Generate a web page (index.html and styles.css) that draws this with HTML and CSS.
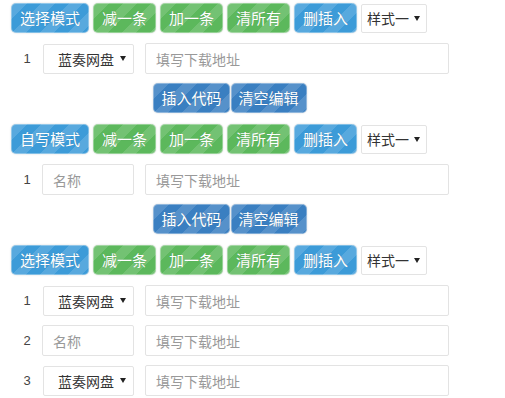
FILE: index.html
```html
<!DOCTYPE html>
<html lang="zh-CN">
<head>
<meta charset="utf-8">
<title>下载地址编辑</title>
<link rel="stylesheet" href="styles.css">
</head>
<body>
<div class="page">
  <section class="block">
    <div class="toolbar">
      <button class="btn btn-info">选择模式</button>
      <button class="btn btn-success">减一条</button>
      <button class="btn btn-success">加一条</button>
      <button class="btn btn-success">清所有</button>
      <button class="btn btn-info">删插入</button>
      <div class="sel sel-style"><span>样式一</span><i class="caret"></i></div>
    </div>
    <div class="rows">
      <div class="row">
        <span class="num">1</span>
        <div class="sel sel-disk"><span>蓝奏网盘</span><i class="caret"></i></div>
        <input class="field url" placeholder="填写下载地址">
      </div>
    </div>
    <div class="actions">
      <button class="btn btn-primary">插入代码</button>
      <button class="btn btn-primary">清空编辑</button>
    </div>
  </section>

  <section class="block">
    <div class="toolbar">
      <button class="btn btn-info">自写模式</button>
      <button class="btn btn-success">减一条</button>
      <button class="btn btn-success">加一条</button>
      <button class="btn btn-success">清所有</button>
      <button class="btn btn-info">删插入</button>
      <div class="sel sel-style"><span>样式一</span><i class="caret"></i></div>
    </div>
    <div class="rows">
      <div class="row">
        <span class="num">1</span>
        <input class="field name" placeholder="名称">
        <input class="field url" placeholder="填写下载地址">
      </div>
    </div>
    <div class="actions">
      <button class="btn btn-primary">插入代码</button>
      <button class="btn btn-primary">清空编辑</button>
    </div>
  </section>

  <section class="block">
    <div class="toolbar">
      <button class="btn btn-info">选择模式</button>
      <button class="btn btn-success">减一条</button>
      <button class="btn btn-success">加一条</button>
      <button class="btn btn-success">清所有</button>
      <button class="btn btn-info">删插入</button>
      <div class="sel sel-style"><span>样式一</span><i class="caret"></i></div>
    </div>
    <div class="rows">
      <div class="row">
        <span class="num">1</span>
        <div class="sel sel-disk"><span>蓝奏网盘</span><i class="caret"></i></div>
        <input class="field url" placeholder="填写下载地址">
      </div>
      <div class="row">
        <span class="num">2</span>
        <input class="field name" placeholder="名称">
        <input class="field url" placeholder="填写下载地址">
      </div>
      <div class="row">
        <span class="num">3</span>
        <div class="sel sel-disk"><span>蓝奏网盘</span><i class="caret"></i></div>
        <input class="field url" placeholder="填写下载地址">
      </div>
    </div>
  </section>
</div>
</body>
</html>
```

FILE: styles.css
```css
* { box-sizing: border-box; }

html, body {
  margin: 0;
  padding: 0;
  background: #fff;
}

body {
  font-family: "Noto Sans CJK SC", "Liberation Sans", sans-serif;
  font-size: 14px;
  color: #333;
}

.page {
  padding: 3px 0 0 11px;
  width: 449px;
}

.block {
  display: flex;
  flex-direction: column;
  margin-bottom: 11px;
}

.toolbar {
  display: flex;
  align-items: center;
  gap: 4px;
  height: 30px;
  margin-bottom: 10px;
}

.btn {
  height: 30px;
  padding: 0 8px;
  border: 1px solid rgba(255, 255, 255, 0.35);
  border-radius: 5px;
  color: #fff;
  font-family: "Noto Sans CJK SC", sans-serif;
  font-size: 15px;
  line-height: 28px;
  cursor: pointer;
  background-image: linear-gradient(135deg,
    rgba(255, 255, 255, 0.14) 25%, transparent 25%,
    transparent 50%, rgba(255, 255, 255, 0.14) 50%,
    rgba(255, 255, 255, 0.14) 75%, transparent 75%, transparent);
  background-size: 28px 28px;
  box-shadow: 0 0 2px rgba(0, 0, 0, 0.15);
  text-shadow: 0 0 1px rgba(0, 0, 0, 0.2);
}

.btn-info { background-color: #3c9bd8; }
.btn-success { background-color: #5cb85c; }
.btn-primary { background-color: #3a7fc1; }

.sel {
  display: flex;
  align-items: center;
  height: 30px;
  border: 1px solid #e3e3e3;
  border-radius: 2px;
  background: #fff;
  color: #333;
}

.caret {
  display: block;
  width: 0;
  height: 0;
  border-left: 3px solid transparent;
  border-right: 3px solid transparent;
  border-top: 5px solid #222;
}

.sel-style {
  width: 66px;
  padding-left: 5px;
  gap: 5px;
  height: 29px;
}

.sel-disk {
  width: 91px;
  padding-left: 14px;
  gap: 6px;
}

.rows {
  display: flex;
  flex-direction: column;
  gap: 9px;
}

.row {
  display: flex;
  align-items: center;
  height: 31px;
}

.num {
  width: 32px;
  text-align: center;
  font-family: "Liberation Sans", sans-serif;
  font-size: 13px;
  color: #444;
}

.field {
  height: 31px;
  border: 1px solid #e3e3e3;
  border-radius: 2px;
  padding: 0 10px;
  font-family: "Noto Sans CJK SC", sans-serif;
  font-size: 14px;
  color: #333;
  background: #fff;
  outline: none;
}

.field::placeholder { color: #999; }

.name { width: 92px; margin-left: -1px; }

.url {
  width: 304px;
  margin-left: 11px;
}

.actions {
  display: flex;
  justify-content: center;
  gap: 1px;
  margin-top: 9px;
  height: 30px;
}

.actions .btn { padding: 0 7px; }
```
